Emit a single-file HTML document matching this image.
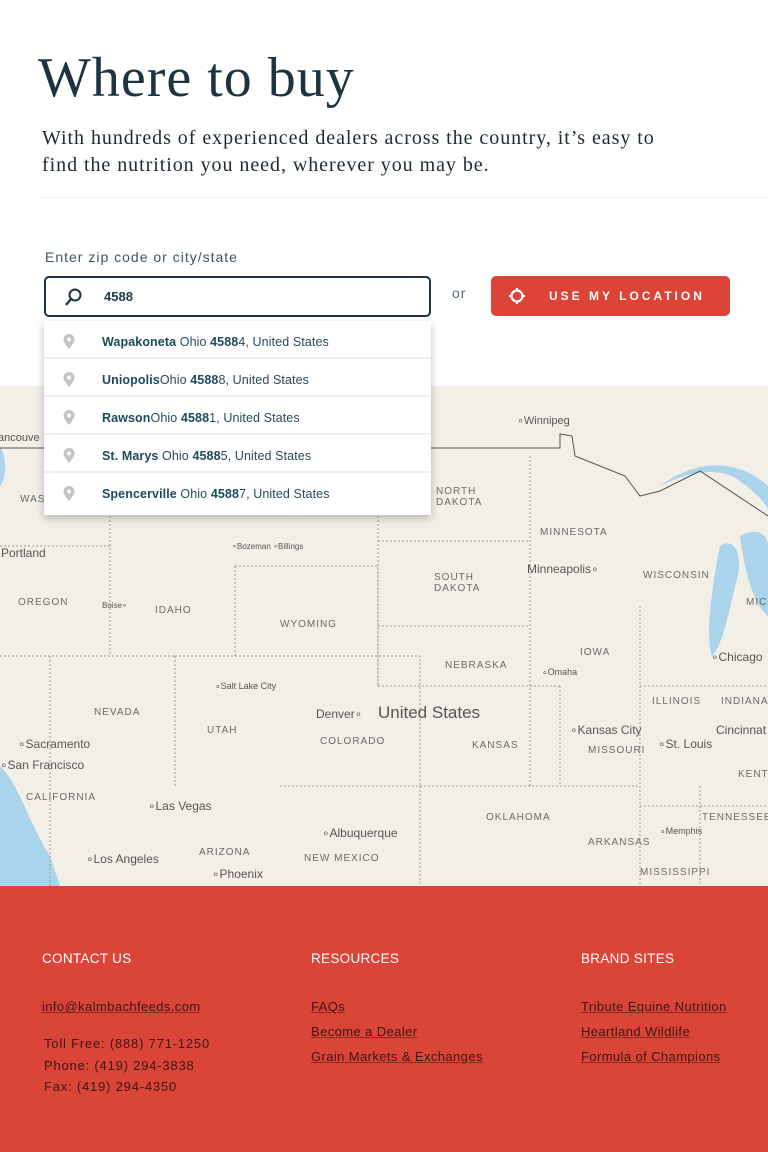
<!DOCTYPE html>
<html><head><meta charset="utf-8"><style>
*{margin:0;padding:0;box-sizing:border-box}
body{width:768px;height:1152px;overflow:hidden;background:#fff;font-family:"Liberation Sans",sans-serif;position:relative}
h1{position:absolute;left:38px;top:46px;font-family:"Liberation Serif",serif;font-weight:400;font-size:56px;color:#1d3440;letter-spacing:1px}
.intro{position:absolute;left:42px;top:125px;font-family:"Liberation Serif",serif;font-size:20px;line-height:27px;color:#1d2a30;letter-spacing:.95px}
.hr{position:absolute;left:38px;right:0;top:197px;height:1px;background:#eee}
.lbl{position:absolute;left:45px;top:249px;font-size:14px;color:#3d5560;letter-spacing:1px}
.input{position:absolute;left:44px;top:276px;width:387px;height:41px;border:2px solid #1d3440;border-radius:5px;background:#fff}
.input span{position:absolute;left:58px;top:11px;font-size:13px;font-weight:bold;color:#1d3a48}
.or{position:absolute;left:452px;top:285px;font-size:14px;color:#5d6d75;letter-spacing:1px}
.btn{position:absolute;left:491px;top:276px;width:239px;height:40px;background:#db4437;border-radius:5px;color:#fff;font-weight:bold;font-size:12px;letter-spacing:3px}
.btn span{position:absolute;left:58px;top:13px}
.map{position:absolute;left:0;top:386px;width:768px;height:500px;background:#f2efe7;overflow:hidden}
.dd{position:absolute;left:44px;top:321px;width:387px;height:194px;background:#fff;box-shadow:0 3px 8px rgba(0,0,0,.25);z-index:5}
.it{height:38px;border-bottom:2px solid #eee;position:relative;font-size:12.5px;color:#2a4a58;letter-spacing:.1px}
.it:last-child{border:none}
.it b{color:#1d4a5c}
.it .t{position:absolute;left:58px;top:14px}
.it svg{position:absolute;left:18px;top:13px}
.ml{position:absolute;font-size:10px;color:#6a6a6a;letter-spacing:1px}
.ct{position:absolute;font-size:11px;color:#555}
footer{position:absolute;left:0;top:886px;width:768px;height:266px;background:#db4538}
.fh{position:absolute;top:65px;font-size:13.5px;color:#fff;letter-spacing:.3px}
.fl{position:absolute;font-size:13px;color:#3a1714;letter-spacing:.4px;text-decoration:underline;text-decoration-color:#8a2a22}
.ft{position:absolute;font-size:13px;color:#3a1714;letter-spacing:.8px}
</style></head><body>
<h1>Where to buy</h1>
<div class="intro">With hundreds of experienced dealers across the country, it’s easy to<br>find the nutrition you need, wherever you may be.</div>
<div class="hr"></div>
<div class="lbl">Enter zip code or city/state</div>
<div class="input"><svg style="position:absolute;left:18px;top:9px" width="20" height="20" viewBox="0 0 20 20"><circle cx="11" cy="8" r="5.5" fill="none" stroke="#1d3440" stroke-width="2"/><path d="M7 12 L2 18" stroke="#1d3440" stroke-width="2.2"/></svg><span>4588</span></div>
<div class="or">or</div>
<div class="btn"><svg style="position:absolute;left:17px;top:11px" width="18" height="18" viewBox="0 0 18 18"><circle cx="9" cy="9" r="5.5" fill="none" stroke="#fff" stroke-width="2.2"/><path d="M9 1v3M9 14v3M1 9h3M14 9h3" stroke="#fff" stroke-width="2"/></svg><span>USE MY LOCATION</span></div>
<div class="map">
<svg width="768" height="500" style="position:absolute;left:0;top:0">
<path d="M660 100 C690 85 720 80 740 95 C760 110 768 120 768 125 L768 100 C740 75 700 70 660 100Z" fill="#aad3ec"/>
<path d="M720 160 C735 150 745 170 735 200 C728 230 722 260 712 270 C705 250 712 200 720 160Z" fill="#aad3ec"/>
<path d="M740 150 C760 140 768 150 768 160 L768 230 C755 220 745 190 740 150Z" fill="#aad3ec"/>
<path d="M0 380 C20 400 30 440 50 470 L60 500 L0 500Z" fill="#aad3ec"/>
<path d="M0 60 L0 100 C8 90 6 70 0 60Z" fill="#aad3ec"/>
<path d="M0 62 H560 V48 L572 50 L575 70 L600 80 L625 90 L640 110 L660 105 L700 85 L768 130" fill="none" stroke="#555" stroke-width="1"/>
<g fill="none" stroke="#999" stroke-width="1" stroke-dasharray="2 2">
<path d="M378 70 V300 M378 155 H530 M378 240 H530 M378 300 H560 M530 70 V400 M235 180 H378 V300 M235 180 V270 M175 270 H420 V400 M175 270 V400 M110 130 V270 M0 270 H175 M50 270 V500 M0 160 H110 M280 400 H640 M420 400 V500 M560 300 V400 M640 220 V500 M640 300 H768 M640 420 H768 M700 400 V500"/>
</g></svg>
<div class="ct" style="left:517px;top:28px">∘Winnipeg</div>
<div class="ct" style="left:-2px;top:46px">ancouve</div>
<div class="ml" style="left:20px;top:108px">WAS</div>
<div class="ml" style="left:436px;top:100px">NORTH<br>DAKOTA</div>
<div class="ml" style="left:540px;top:141px">MINNESOTA</div>
<div class="ct" style="left:1px;top:160px;font-size:12px">Portland</div>
<div class="ct" style="left:232px;top:156px;font-size:8px">∘Bozeman ∘Billings</div>
<div class="ct" style="left:527px;top:176px;font-size:12px">Minneapolis∘</div>
<div class="ml" style="left:643px;top:184px">WISCONSIN</div>
<div class="ml" style="left:434px;top:186px">SOUTH<br>DAKOTA</div>
<div class="ml" style="left:18px;top:211px">OREGON</div>
<div class="ct" style="left:102px;top:215px;font-size:8px">Boise∘</div>
<div class="ml" style="left:155px;top:219px">IDAHO</div>
<div class="ml" style="left:746px;top:211px">MIC</div>
<div class="ml" style="left:280px;top:233px">WYOMING</div>
<div class="ml" style="left:580px;top:261px">IOWA</div>
<div class="ml" style="left:445px;top:274px">NEBRASKA</div>
<div class="ct" style="left:542px;top:281px;font-size:9px">∘Omaha</div>
<div class="ct" style="left:711px;top:264px;font-size:12px">∘Chicago</div>
<div class="ct" style="left:215px;top:295px;font-size:9px">∘Salt Lake City</div>
<div class="ml" style="left:652px;top:310px">ILLINOIS</div>
<div class="ml" style="left:721px;top:310px">INDIANA</div>
<div class="ml" style="left:94px;top:321px">NEVADA</div>
<div class="ct" style="left:316px;top:321px;font-size:12px">Denver∘</div>
<div class="ct" style="left:378px;top:317px;font-size:17px;color:#555">United States</div>
<div class="ml" style="left:207px;top:339px">UTAH</div>
<div class="ct" style="left:570px;top:337px;font-size:12px">∘Kansas City</div>
<div class="ct" style="left:716px;top:337px;font-size:12px">Cincinnat</div>
<div class="ml" style="left:320px;top:350px">COLORADO</div>
<div class="ct" style="left:18px;top:351px;font-size:12px">∘Sacramento</div>
<div class="ml" style="left:472px;top:354px">KANSAS</div>
<div class="ml" style="left:588px;top:359px">MISSOURI</div>
<div class="ct" style="left:658px;top:351px;font-size:12px">∘St. Louis</div>
<div class="ct" style="left:0;top:372px;font-size:12px">∘San Francisco</div>
<div class="ml" style="left:738px;top:383px">KENT</div>
<div class="ml" style="left:26px;top:406px">CALIFORNIA</div>
<div class="ct" style="left:148px;top:413px;font-size:12px">∘Las Vegas</div>
<div class="ml" style="left:486px;top:426px">OKLAHOMA</div>
<div class="ml" style="left:702px;top:426px">TENNESSEE</div>
<div class="ct" style="left:322px;top:440px;font-size:12px">∘Albuquerque</div>
<div class="ct" style="left:660px;top:440px;font-size:9px">∘Memphis</div>
<div class="ml" style="left:588px;top:451px">ARKANSAS</div>
<div class="ml" style="left:199px;top:461px">ARIZONA</div>
<div class="ml" style="left:304px;top:467px">NEW MEXICO</div>
<div class="ct" style="left:86px;top:466px;font-size:12px">∘Los Angeles</div>
<div class="ml" style="left:640px;top:481px">MISSISSIPPI</div>
<div class="ct" style="left:212px;top:481px;font-size:12px">∘Phoenix</div>
</div>
<div class="dd">
<div class="it"><svg width="14" height="16" viewBox="0 0 14 16"><path d="M7 15C3 10 1.5 7.5 1.5 5.5a5.5 5.5 0 0 1 11 0C12.5 7.5 11 10 7 15Z" fill="#c4c4c4"/><circle cx="7" cy="5.5" r="2" fill="#fff"/></svg><span class="t"><b>Wapakoneta</b> Ohio <b>4588</b>4, United States</span></div>
<div class="it"><svg width="14" height="16" viewBox="0 0 14 16"><path d="M7 15C3 10 1.5 7.5 1.5 5.5a5.5 5.5 0 0 1 11 0C12.5 7.5 11 10 7 15Z" fill="#c4c4c4"/><circle cx="7" cy="5.5" r="2" fill="#fff"/></svg><span class="t"><b>Uniopolis</b>Ohio <b>4588</b>8, United States</span></div>
<div class="it"><svg width="14" height="16" viewBox="0 0 14 16"><path d="M7 15C3 10 1.5 7.5 1.5 5.5a5.5 5.5 0 0 1 11 0C12.5 7.5 11 10 7 15Z" fill="#c4c4c4"/><circle cx="7" cy="5.5" r="2" fill="#fff"/></svg><span class="t"><b>Rawson</b>Ohio <b>4588</b>1, United States</span></div>
<div class="it"><svg width="14" height="16" viewBox="0 0 14 16"><path d="M7 15C3 10 1.5 7.5 1.5 5.5a5.5 5.5 0 0 1 11 0C12.5 7.5 11 10 7 15Z" fill="#c4c4c4"/><circle cx="7" cy="5.5" r="2" fill="#fff"/></svg><span class="t"><b>St. Marys</b> Ohio <b>4588</b>5, United States</span></div>
<div class="it"><svg width="14" height="16" viewBox="0 0 14 16"><path d="M7 15C3 10 1.5 7.5 1.5 5.5a5.5 5.5 0 0 1 11 0C12.5 7.5 11 10 7 15Z" fill="#c4c4c4"/><circle cx="7" cy="5.5" r="2" fill="#fff"/></svg><span class="t"><b>Spencerville</b> Ohio <b>4588</b>7, United States</span></div>
</div>
<footer>
<div class="fh" style="left:42px">CONTACT US</div>
<div class="fh" style="left:311px">RESOURCES</div>
<div class="fh" style="left:581px">BRAND SITES</div>
<div class="fl" style="left:42px;top:113px">info@kalmbachfeeds.com</div>
<div class="ft" style="left:44px;top:150px">Toll Free: (888) 771-1250</div>
<div class="ft" style="left:44px;top:172px">Phone: (419) 294-3838</div>
<div class="ft" style="left:44px;top:193px">Fax: (419) 294-4350</div>
<div class="fl" style="left:311px;top:113px">FAQs</div>
<div class="fl" style="left:311px;top:138px">Become a Dealer</div>
<div class="fl" style="left:311px;top:163px">Grain Markets &amp; Exchanges</div>
<div class="fl" style="left:581px;top:113px">Tribute Equine Nutrition</div>
<div class="fl" style="left:581px;top:138px">Heartland Wildlife</div>
<div class="fl" style="left:581px;top:163px">Formula of Champions</div>
</footer>
</body></html>
